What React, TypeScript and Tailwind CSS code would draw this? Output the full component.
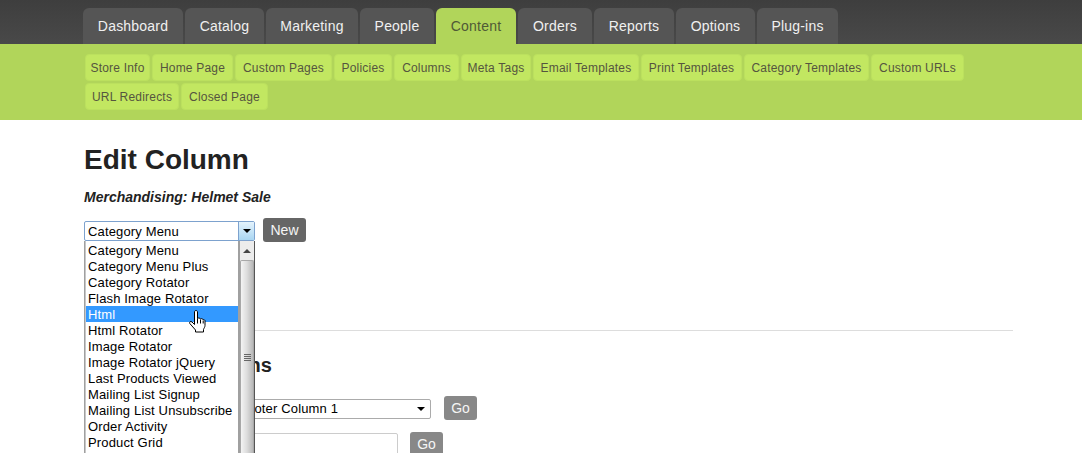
import React from 'react';

const tabs = [
  { label: 'Dashboard', width: 'w-[100px]' },
  { label: 'Catalog', width: 'w-[79px]' },
  { label: 'Marketing', width: 'w-[92px]' },
  { label: 'People', width: 'w-[74px]' },
  { label: 'Content', width: 'w-[80px]' },
  { label: 'Orders', width: 'w-[74px]' },
  { label: 'Reports', width: 'w-[80px]' },
  { label: 'Options', width: 'w-[79px]' },
  { label: 'Plug-ins', width: 'w-[81px]' },
];
const subRows = [
  [
    { label: 'Store Info', width: 'w-[65px]' },
    { label: 'Home Page', width: 'w-[81px]' },
    { label: 'Custom Pages', width: 'w-[97px]' },
    { label: 'Policies', width: 'w-[58px]' },
    { label: 'Columns', width: 'w-[65px]' },
    { label: 'Meta Tags', width: 'w-[70px]' },
    { label: 'Email Templates', width: 'w-[106px]' },
    { label: 'Print Templates', width: 'w-[101px]' },
    { label: 'Category Templates', width: 'w-[125px]' },
    { label: 'Custom URLs', width: 'w-[93px]' },
  ],
  [
    { label: 'URL Redirects', width: 'w-[94px]' },
    { label: 'Closed Page', width: 'w-[87px]' },
  ],
];
const columnTypes = [
  'Category Menu',
  'Category Menu Plus',
  'Category Rotator',
  'Flash Image Rotator',
  'Html',
  'Html Rotator',
  'Image Rotator',
  'Image Rotator jQuery',
  'Last Products Viewed',
  'Mailing List Signup',
  'Mailing List Unsubscribe',
  'Order Activity',
  'Product Grid',
];

const HandCursor = () => (
  <svg width="17" height="24" viewBox="0 0 17 24" className="absolute left-[103px] top-[4px]">
    <path
      d="M5.500 2c0-2 3-2 3 0v6.500c1-.8 2.500-.6 3 .5 1-.6 2.300-.3 2.700.8.8-.4 1.800 0 1.800 1.200v4.500c0 1.500-1 2.500-1.500 4v2.500H6.500V20L.8 13.500c-.9-1.500 1-2.800 2.200-1.500l2.500 2.500z"
      fill="#fff"
      stroke="#000"
      strokeWidth="1"
    />
    <path d="M8.500 8.500v5M11.500 9.500v4M14.200 10.500v3" stroke="#000" strokeWidth="1" />
  </svg>
);

const App = () => {
  return (
    <div className="h-[453px] overflow-hidden bg-white font-['Liberation_Sans',Arial,sans-serif]">
      <div className="h-[44px] bg-gradient-to-b from-[#3e3e3e] to-[#494949] pl-[83px] pt-[8px]">
        <div className="flex gap-[2px]">
          {tabs.map((t) => (
            <div
              key={t.label}
              className={`h-[36px] rounded-t-[6px] text-center text-[14px] leading-[36px] tracking-[0.2px] ${t.width} ${
                t.label === 'Content' ? 'bg-[#b1d55a] text-[#4f5a36]' : 'bg-[#555555] text-[#f0f0f0]'
              }`}
            >
              {t.label}
            </div>
          ))}
        </div>
      </div>

      <div className="flex h-[76px] flex-col gap-[2px] bg-[#b1d55a] pl-[85px] pt-[10px]">
        {subRows.map((row, i) => (
          <div key={i} className="flex gap-[2px]">
            {row.map((s) => (
              <div
                key={s.label}
                className={`h-[27px] rounded-[4px] border border-[#bbe05e] bg-[#c2e761] text-center text-[12px] leading-[27px] tracking-[0.2px] text-[#55553f] ${s.width}`}
              >
                {s.label}
              </div>
            ))}
          </div>
        ))}
      </div>

      <div className="ml-[84px] w-[929px]">
        <h1 className="mt-[24px] text-[28px] font-bold leading-[32px] text-[#222222]">Edit Column</h1>
        <p className="mt-[13px] text-[14px] font-bold italic leading-[16px] text-[#222222]">Merchandising: Helmet Sale</p>

        <div className="mt-[13px] flex items-start gap-[8px]">
          <div className="relative mt-[3px] h-[20px] w-[171px] rounded-[2px] border border-[#7da2ce] bg-white">
            <span className="absolute left-[3px] top-0 text-[13px] leading-[20px] tracking-[0.15px] text-black">Category Menu</span>
            <div className="absolute right-0 top-0 flex h-[18px] w-[16px] items-center justify-center border-l border-[#7da2ce] bg-gradient-to-b from-[#e4f3fc] to-[#a9d6f2]">
              <div className="h-0 w-0 border-x-[4px] border-t-[4px] border-x-transparent border-t-black" />
            </div>

            <div className="absolute left-[-1px] top-[19px] flex h-[212px] w-[171px] border-l border-[#a0a0a0] bg-white shadow-[inset_1px_0_0_#c8c8c8]">
              <ul className="w-[155px] border-r-2 border-[#a0a0a0] pl-[1px] pt-[1px]">
                {columnTypes.map((c) => (
                  <li
                    key={c}
                    className={`relative h-[16px] pl-[2px] text-[13px] leading-[18px] tracking-[0.15px] ${
                      c === 'Html' ? 'bg-[#3399ff] text-white' : 'text-black'
                    }`}
                  >
                    {c}
                    {c === 'Html' && <HandCursor />}
                  </li>
                ))}
              </ul>
              <div className="flex w-[15px] flex-col border-r border-[#555555] bg-[#ececec]">
                <div className="flex h-[19px] items-center justify-center">
                  <div className="h-0 w-0 border-x-[4px] border-b-[4px] border-x-transparent border-b-[#444444]" />
                </div>
                <div className="flex h-[193px] flex-col items-center justify-center gap-[1px] rounded-t-[2px] border-x border-t border-[#a8a8a8] bg-gradient-to-r from-[#f4f4f4] via-[#dcdcdc] to-[#b8b8b8]">
                  <div className="h-px w-[7px] bg-[#666666]" />
                  <div className="h-px w-[7px] bg-[#666666]" />
                  <div className="h-px w-[7px] bg-[#666666]" />
                  <div className="h-px w-[7px] bg-[#666666]" />
                </div>
              </div>
            </div>
          </div>
          <button className="h-[24px] w-[43px] rounded-[3px] bg-[#666666] text-center text-[14px] leading-[24px] text-[#f5f5f5]">
            New
          </button>
        </div>

        <hr className="mt-[88px] border-[#dddddd]" />

        <h2 className="mt-[22px] text-[20px] font-bold leading-[24px] text-[#222222]">Edit Other Columns</h2>

        <div className="mt-[19px] flex items-start gap-[13px]">
          <div className="ml-[150px] mt-[3px] flex h-[20px] w-[197px] items-center justify-between rounded-[2px] border border-[#ababab] bg-white pl-[4px] pr-[5px]">
            <span className="text-[13px] leading-[20px] tracking-[0.15px] text-black">Footer Column 1</span>
            <div className="h-0 w-0 border-x-[4px] border-t-[4px] border-x-transparent border-t-black" />
          </div>
          <button className="h-[24px] w-[33px] rounded-[3px] bg-[#888888] text-center text-[14px] leading-[24px] text-[#f5f5f5]">
            Go
          </button>
        </div>

        <div className="mt-[12px] flex items-start gap-[12px]">
          <div className="ml-[150px] mt-[1px] h-[22px] w-[164px] rounded-[2px] border border-[#cccccc] bg-white" />
          <button className="h-[24px] w-[33px] rounded-[3px] bg-[#888888] text-center text-[14px] leading-[24px] text-[#f5f5f5]">
            Go
          </button>
        </div>
      </div>
    </div>
  );
};

export default App;
